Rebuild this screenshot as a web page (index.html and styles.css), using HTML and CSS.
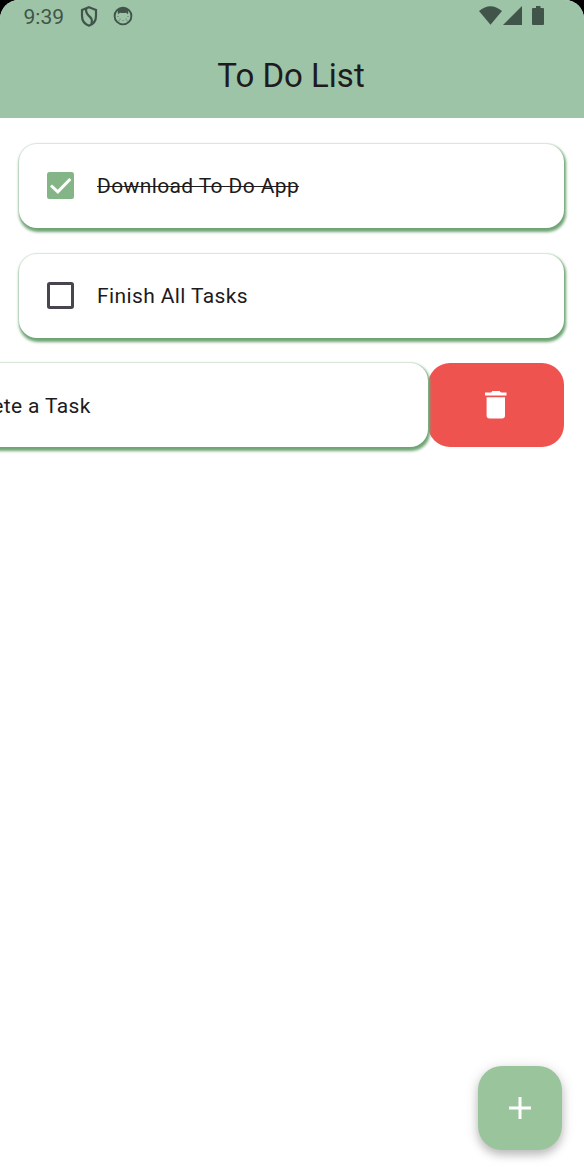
FILE: index.html
```html
<!DOCTYPE html>
<html lang="en">
<head>
<meta charset="utf-8">
<title>To Do List</title>
<link rel="stylesheet" href="styles.css">
</head>
<body>
<div class="device">
  <div class="app">
    <header class="appbar">
      <div class="status">
        <span class="clock">9:39</span>
        <svg class="shield" width="18" height="21" viewBox="0 0 18 21" fill="none" stroke="#41544a" stroke-width="2.200">
          <path d="M9 1.300 16 4V10C16 15 13 18.300 9 19.700C5 18.300 2 15 2 10V4Z"/>
          <path d="M6.200 2.500C4.500 11 14.500 9.500 11.300 18"/>
        </svg>
        <svg class="face" width="20" height="20" viewBox="0 0 20 20">
          <circle cx="10" cy="10" r="8.400" fill="none" stroke="#41544a" stroke-width="1.900"/>
          <path fill="#41544a" d="M4.500 3.500Q10-.5 15.500 3.500L15 8.200 13 6.700Q10 7.300 7 6.700L5 8.200Z"/>
          <path fill="#41544a" d="M4.500 10h1v1h-1zM14.500 10h1v1h-1zM6.500 12.500h1v1h-1zM12.500 12.500h1v1h-1zM9.500 14h1v1h-1zM5.500 14.200h1v1h-1zM13.500 14.200h1v1h-1z" opacity=".7"/>
        </svg>
        <svg class="wifi" width="23" height="19" viewBox="0 0 23 19"><path fill="#41544a" d="M0 5Q11.500-4.500 23 5L11.500 18.700Z"/></svg>
        <svg class="signal" width="19" height="19" viewBox="0 0 19 19"><path fill="#41544a" d="M19 0V19H0Z"/></svg>
        <svg class="battery" width="12" height="19" viewBox="0 0 12 19"><path fill="#41544a" d="M4 0H8.500V2H11Q12 2 12 3V18Q12 19 11 19H1Q0 19 0 18V3Q0 2 1 2H4Z"/></svg>
      </div>
      <h1 class="title">To Do List</h1>
    </header>
    <main class="tasks">
      <div class="row">
        <div class="card">
          <svg class="check" width="27" height="27" viewBox="0 0 27 27"><rect width="27" height="27" rx="2.500" fill="#84b587"/><path d="M4 13.500 10.800 19.800 23.300 7" fill="none" stroke="#fff" stroke-width="3"/></svg>
          <span class="label done">Download To Do App</span>
        </div>
      </div>
      <div class="row">
        <div class="card">
          <svg class="check" width="27" height="27" viewBox="0 0 27 27"><rect x="1.500" y="1.500" width="24" height="24" rx="1.200" fill="none" stroke="#49454f" stroke-width="3"/></svg>
          <span class="label">Finish All Tasks</span>
        </div>
      </div>
      <div class="row swiped">
        <div class="card">
          <svg class="check" width="27" height="27" viewBox="0 0 27 27"><rect x="1.500" y="1.500" width="24" height="24" rx="1.200" fill="none" stroke="#49454f" stroke-width="3"/></svg>
          <span class="label">Delete a Task</span>
        </div>
        <div class="delete">
          <svg width="22" height="28" viewBox="0 0 22 28"><path fill="#fff" d="M0 1.500H6L7.500 0H14.500L16 1.500H21.500V4.600H0ZM1.600 6.200H20V24.500Q20 27.500 17 27.500H4.600Q1.600 27.500 1.600 24.500Z"/></svg>
        </div>
      </div>
    </main>
    <button class="fab" aria-label="Add task">
      <svg width="22" height="22" viewBox="0 0 22 22"><path d="M11 0V22M0 11H22" stroke="#fff" stroke-width="3"/></svg>
    </button>
  </div>
</div>
</body>
</html>
```
FILE: styles.css
```css
* { box-sizing: border-box; }
body { margin: 0; font-family: Roboto, sans-serif; color: #1d1b20; }
.device { height: 1170px; overflow: hidden; background: linear-gradient(#000 0 40px, #fff 40px); }
.app { display: flex; flex-direction: column; height: 100%; background: #fff; border-radius: 19px 19px 0 0; overflow: hidden; }
.appbar { height: 118px; flex: none; background: #9dc4a7; }
.status { display: flex; align-items: flex-start; height: 32px; padding: 6px 40px 0 23.500px; }
.clock { width: 56.500px; font-size: 21px; line-height: 22px; color: #41544a; }
.face { margin-left: 15px; }
.wifi { margin-left: auto; }
.signal { margin-left: 1px; }
.battery { margin-left: 10px; }
.title { margin: 23.500px 2px 0 0; font-size: 33px; line-height: 40px; font-weight: 400; text-align: center; }
.tasks { display: flex; flex-direction: column; gap: 26px; flex: 1; padding: 26px 20px 0 19px; }
.row { display: flex; height: 84px; }
.card { display: flex; align-items: center; width: 545px; flex: none; padding-left: 28px; background: #fff; border-radius: 18px; box-shadow: 1px 2.500px 3px .8px #6ea474, 0 0 1px 1px #e8f2ea; }
.check { flex: none; margin-top: -1px; }
.label { margin-left: 23px; font-size: 21px; line-height: 30px; letter-spacing: .38px; white-space: nowrap; }
.done { text-decoration: line-through; text-decoration-thickness: 1px; }
.swiped { margin-top: -1px; }
.swiped .card { margin-left: -136px; z-index: 1; }
.swiped .label { padding-top: 1px; }
.delete { display: flex; align-items: center; justify-content: center; width: 136px; flex: none; background: #ef534f; border-radius: 22px; }
.fab { align-self: flex-end; display: flex; align-items: center; justify-content: center; width: 84px; height: 84px; flex: none; margin: 0 22px 20px 0; padding: 0; border: 0; border-radius: 24px; background: #9ac49b; box-shadow: 0 5px 8px rgba(0,0,0,.2), 0 2px 15px rgba(0,0,0,.12); }
```
